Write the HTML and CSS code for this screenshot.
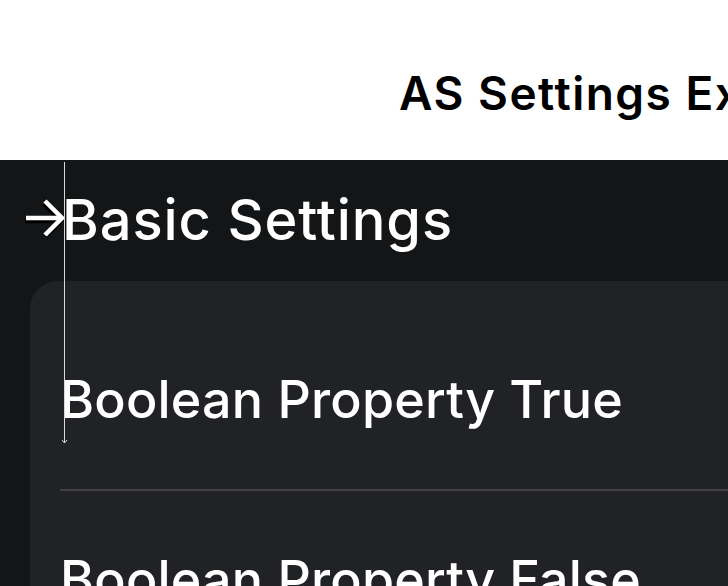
FILE: index.html
```html
<!DOCTYPE html>
<html lang="en">
<head>
  <meta charset="UTF-8" />
  <meta name="viewport" content="width=device-width, initial-scale=1.0"/>
  <title>AS Settings Example</title>
  <link rel="stylesheet" href="styles.css">
</head>
<body>

  <header class="nav">
    <h1 class="nav-title">AS Settings Example</h1>
  </header>

  <main class="content">
    <h2 class="section-title">
      <svg class="marker" width="44" height="44" viewBox="0 0 44 44">
        <g class="marker-shadow" transform="translate(-1 3)">
          <path d="M2 26 H38 M21 9 L38 26 L21 43" />
        </g>
        <path d="M2 26 H38 M21 9 L38 26 L21 43" />
      </svg>
      Basic Settings
    </h2>

    <div class="card">
      <div class="row">Boolean Property True</div>
      <div class="row">Boolean Property False</div>
    </div>

    <svg class="guide" width="9" height="284" viewBox="0 0 9 284">
      <path d="M4.5 0 V281 M2 278 L4.5 281 L7 278" />
    </svg>
  </main>

</body>
</html>
```

FILE: styles.css
```css
body {
  margin: 0;
  width: 728px;
  height: 586px;
  overflow: hidden;
  background-color: #141517;
  font-family: Inter, 'Noto Sans', sans-serif;
  color: #ffffff;
}

.nav {
  background-color: #ffffff;
  height: 160px;
  box-sizing: border-box;
  padding: 65px 0 0 399px;
  overflow: hidden;
}

.nav-title {
  margin: 0;
  font-size: 46px;
  font-weight: 600;
  line-height: 56px;
  letter-spacing: 1.5px;
  color: #000000;
  white-space: nowrap;
}

.content {
  position: relative;
  padding-top: 20px;
}

.section-title {
  position: relative;
  margin: 0 0 0 62px;
  font-size: 56px;
  font-weight: 500;
  line-height: 80px;
  letter-spacing: 0.9px;
  white-space: nowrap;
}

.marker {
  position: absolute;
  left: -38px;
  top: 12px;
  fill: none;
  stroke: #ffffff;
  stroke-width: 4.5;
}

.marker-shadow {
  stroke: #000000;
}

.card {
  margin: 21px 0 0 30px;
  width: 760px;
  padding-top: 30px;
  background-color: #212226;
  border-radius: 28px;
}

.row {
  margin-left: 30px;
  height: 178px;
  display: flex;
  align-items: center;
  font-size: 52px;
  font-weight: 500;
  line-height: 60px;
  letter-spacing: 0.2px;
  white-space: nowrap;
}

.row + .row {
  border-top: 2px solid #414145;
}

.guide {
  position: absolute;
  left: 60px;
  top: 2px;
  fill: none;
  stroke: #d8d8d8;
  stroke-width: 1;
}
```
